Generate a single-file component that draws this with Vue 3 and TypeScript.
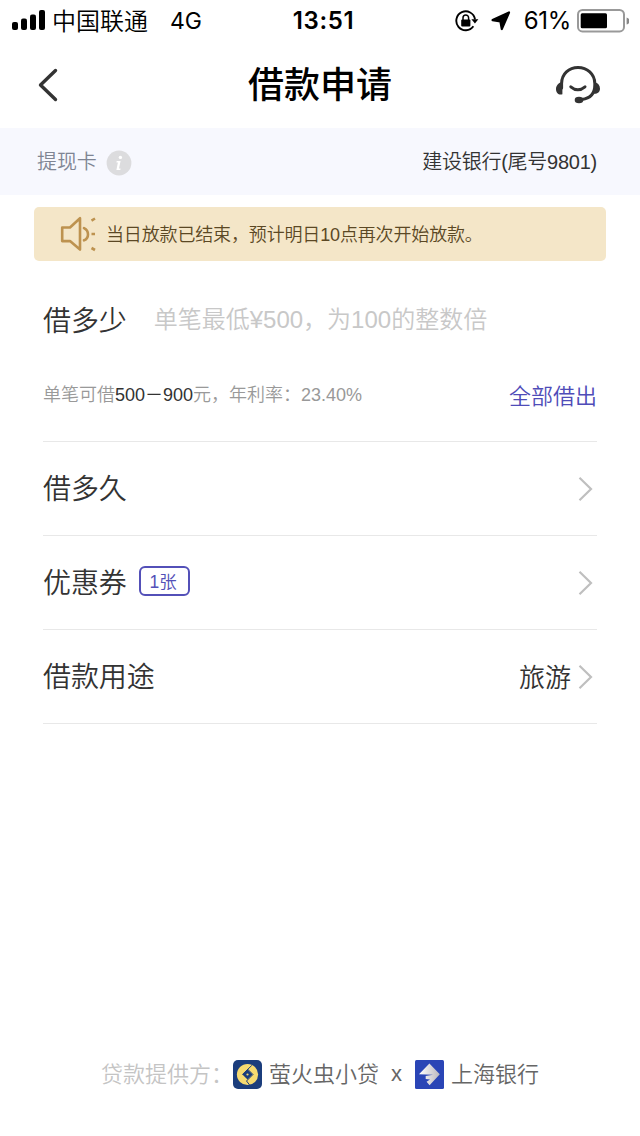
<script setup lang="ts">
interface Row {
  label: string
  badge?: string
  value?: string
}

const rows: Row[] = [
  { label: '借多久' },
  { label: '优惠券', badge: '1张' },
  { label: '借款用途', value: '旅游' },
]
</script>

<template>
  <main class="screen">
    <div class="status">
      <div class="status-left">
        <svg class="signal" width="34" height="20" viewBox="0 0 34 20">
          <rect x="0" y="12" width="6" height="8" rx="2" />
          <rect x="9" y="8.5" width="6" height="11.5" rx="2" />
          <rect x="18" y="4.5" width="6" height="15.5" rx="2" />
          <rect x="27" y="0" width="6" height="20" rx="2" />
        </svg>
        <span class="carrier">中国联通</span>
        <span class="network">4G</span>
      </div>
      <span class="clock">13:51</span>
      <div class="status-right">
        <svg class="lock" width="24" height="22" viewBox="0 0 24 22">
          <path d="M18.4 16.2A9.4 9.4 0 1 1 20 9.3" fill="none" stroke="#000" stroke-width="1.9" />
          <path d="M16.4 9.2H23.4L19.9 13.6Z" />
          <rect x="6.2" y="9.5" width="9.2" height="7" rx="1" />
          <path d="M8 10V7.8a2.8 2.8 0 0 1 5.6 0V10" fill="none" stroke="#000" stroke-width="1.5" />
        </svg>
        <svg class="arrow" width="20" height="20" viewBox="0 0 20 20">
          <path d="M18 1.5L10.8 18L9.4 10.4L1.6 9.1Z" stroke="#000" stroke-width="2.2" stroke-linejoin="round" />
        </svg>
        <span class="percent">61%</span>
        <svg class="battery" width="52" height="24" viewBox="0 0 52 24">
          <rect x="1" y="1" width="46" height="21.4" rx="4.5" fill="none" stroke="#999" stroke-width="2" />
          <rect x="3.7" y="4.2" width="26.3" height="15" rx="1.5" />
          <path d="M49.6 8.4Q52.5 9.4 52.5 12T49.6 15.6Z" fill="#888" />
        </svg>
      </div>
    </div>

    <header class="nav">
      <svg width="24" height="36" viewBox="0 0 24 36">
        <path d="M20.5 3.5L5.5 18L20.5 32.5" fill="none" stroke="#333" stroke-width="3.4" stroke-linecap="round" stroke-linejoin="round" />
      </svg>
      <h1>借款申请</h1>
      <svg width="48" height="42" viewBox="0 0 48 42">
        <g fill="none" stroke="#333" stroke-width="3" stroke-linecap="round">
          <path d="M7.6 24V19.5C7.6 9.9 15 3.4 24 3.4S40.8 9.9 40.8 19.5V21C40.8 29.6 35.8 34.5 27.8 35.4" />
          <path d="M16.8 22.8Q23.8 28.8 31 22.8" />
        </g>
        <path d="M8.4 17V30.3C4.8 31.6 2 28.7 2 25.2C2 21.6 4.5 19.4 6.6 18.6Z" fill="#333" />
        <path d="M40 17V29.8C43.5 30 46 27.8 46 24.7C46 21.4 43.7 19.4 41.8 18.6Z" fill="#333" />
        <ellipse cx="25" cy="36" rx="4.3" ry="3.2" fill="#333" />
      </svg>
    </header>

    <section class="card-bar">
      <div class="card-label">
        <span>提现卡</span>
        <svg width="26" height="26" viewBox="0 0 26 26">
          <circle cx="13" cy="13" r="12.4" fill="#dcdcde" />
          <circle cx="14.4" cy="7.4" r="1.7" fill="#fff" />
          <path d="M10.7 11H14.6L13 18.6H14.6L14.3 20H10.4L11.9 12.5H10.4Z" fill="#fff" />
        </svg>
      </div>
      <span class="card-name">建设银行(尾号9801)</span>
    </section>

    <section class="notice">
      <svg width="36" height="36" viewBox="0 0 36 36" fill="none" stroke="#bd924f" stroke-width="2.6" stroke-linejoin="round">
        <path d="M2.2 11.5H10L20 2.2V33.6L10 25.1H2.2Z" />
        <path d="M24 12.2Q28 14.2 28 18.4T24 24.3" stroke-linecap="round" />
        <path d="M31.5 4.6L35 2.5M31.5 18H35M31.5 32L35 34" />
      </svg>
      <span class="notice-text">当日放款已结束，预计明日10点再次开始放款。</span>
    </section>

    <section class="amount">
      <div class="amount-input">
        <span class="label">借多少</span>
        <span class="placeholder">单笔最低¥500，为100的整数倍</span>
      </div>
      <div class="amount-info">
        <span class="hint">单笔可借<b>500－900</b>元，年利率：23.40%</span>
        <span class="all">全部借出</span>
      </div>
    </section>

    <section v-for="row in rows" :key="row.label" class="row">
      <span class="label">{{ row.label }}</span>
      <span v-if="row.badge" class="badge">{{ row.badge }}</span>
      <span class="value">{{ row.value }}</span>
      <svg width="16" height="26" viewBox="0 0 16 26">
        <path d="M1.5 1.8L13 13L1.5 24.2" fill="none" stroke="#bfbfbf" stroke-width="2.2" />
      </svg>
    </section>

    <footer class="providers">
      <span class="by">贷款提供方：</span>
      <svg class="firefly" width="29" height="29" viewBox="0 0 29 29">
        <rect width="29" height="29" rx="5" fill="#1b3d7c" />
        <circle cx="14.5" cy="14.5" r="10.6" fill="#f6da70" />
        <path d="M18.8 5.4L9.4 14.5M14.5 9L20 14.5L13.5 21L16.5 24.8" fill="none" stroke="#1b3d7c" stroke-width="1" />
        <path d="M14.5 9.4L19.6 14.5L14.5 19.6L9.4 14.5Z" fill="#1b3d7c" />
        <circle cx="14.5" cy="14.5" r="1.1" fill="#f6da70" />
      </svg>
      <span>萤火虫小贷</span>
      <span class="times">x</span>
      <svg class="bank" width="29" height="29" viewBox="0 0 29 29">
        <defs>
          <linearGradient id="silver" x1="0" y1="0" x2="1" y2="0">
            <stop offset="0" stop-color="#fff" />
            <stop offset="1" stop-color="#bbb7bd" />
          </linearGradient>
        </defs>
        <rect width="29" height="29" rx="1.5" fill="#2a45b6" />
        <path d="M14.4 3.4L24.8 14.3L14.6 25.2L11.6 21.8L15 19.4L10.7 19V16L18 14.8L4 14.2Z" fill="url(#silver)" />
      </svg>
      <span>上海银行</span>
    </footer>
  </main>
</template>

<style>
body {
  margin: 0;
  background: #fff;
}
</style>

<style scoped>
.screen {
  display: flex;
  flex-direction: column;
  width: 640px;
  height: 1136px;
  overflow: hidden;
  background: #fff;
  color: #333;
  font-family: "Liberation Sans", "Noto Sans CJK SC", sans-serif;
  font-weight: 350;
  white-space: nowrap;
}
svg {
  display: block;
  flex: none;
}
.status {
  display: grid;
  grid-template-columns: 1fr auto 1fr;
  align-items: center;
  box-sizing: border-box;
  height: 41px;
  padding: 1px 11px 0 12px;
  color: #000;
  font-family: Inter, "Noto Sans CJK SC", sans-serif;
  font-size: 24px;
  line-height: 40px;
}
.status-left,
.status-right {
  display: flex;
  align-items: center;
  height: 40px;
}
.status-right {
  justify-content: flex-end;
}
.signal {
  margin-bottom: 2px;
}
.carrier {
  margin-left: 6px;
  padding-top: 1px;
}
.network {
  margin-left: 22px;
  font-weight: 400;
  font-size: 23px;
}
.clock {
  padding-left: 6px;
  font-weight: 600;
  letter-spacing: 0.6px;
}
.lock {
  margin-bottom: 1px;
}
.arrow {
  margin-left: 12px;
}
.percent {
  margin-left: 13px;
  font-weight: 400;
  letter-spacing: -0.3px;
}
.battery {
  margin-left: 6px;
}
.nav {
  display: grid;
  grid-template-columns: 1fr auto 1fr;
  align-items: center;
  height: 87px;
  padding: 0 38px 0 35px;
}
.nav svg:last-child {
  justify-self: end;
}
.nav h1 {
  margin: 0;
  padding: 2px 0 0 3px;
  color: #000;
  font-size: 36px;
  font-weight: 500;
  line-height: 85px;
}
.card-bar {
  display: flex;
  align-items: center;
  justify-content: space-between;
  height: 67px;
  padding: 0 43px 0 37px;
  background: #f7f8fe;
  font-size: 20px;
}
.card-label {
  display: flex;
  align-items: center;
  gap: 9px;
  color: #7f8593;
}
.card-label span {
  padding-bottom: 2px;
  letter-spacing: -0.1px;
}
.card-name {
  padding-bottom: 2px;
  letter-spacing: -0.25px;
}
.card-label svg {
  margin-top: 3px;
}
.notice {
  display: flex;
  align-items: center;
  gap: 10px;
  height: 54px;
  margin: 12px 34px 0;
  padding-left: 26px;
  border-radius: 5px;
  background: #f4e6c8;
  color: #5b4824;
  font-size: 18px;
}
.notice-text {
  padding-bottom: 2px;
  letter-spacing: -0.15px;
}
.amount {
  height: 180px;
  margin: 0 43px;
  border-bottom: 1px solid #e8e8e8;
}
.amount-input {
  display: flex;
  align-items: center;
  height: 116px;
}
.label {
  padding-bottom: 3px;
  font-size: 28px;
  letter-spacing: -0.1px;
}
.amount-input .label {
  padding-bottom: 0;
}
.placeholder {
  margin-left: 27px;
  padding-bottom: 3px;
  color: #c8c8c8;
  font-size: 24px;
}
.amount-info {
  display: flex;
  align-items: center;
  justify-content: space-between;
  height: 38px;
}
.hint {
  padding-bottom: 7px;
  color: #999;
  font-size: 18px;
}
.hint b {
  color: #333;
  font-weight: 400;
}
.all {
  padding-bottom: 4px;
  color: #4f4cb8;
  font-size: 22px;
}
.row {
  display: flex;
  align-items: center;
  height: 93px;
  margin: 0 43px;
  padding-right: 3px;
  border-bottom: 1px solid #e8e8e8;
}
.row svg {
  margin-left: 7px;
}
.badge {
  box-sizing: border-box;
  width: 51px;
  height: 30px;
  margin: 0 0 4px 12px;
  padding-right: 2px;
  border: 2px solid #5350b8;
  border-radius: 6px;
  color: #5350b8;
  font-size: 17.5px;
  line-height: 29px;
  text-align: center;
}
.value {
  margin-left: auto;
  padding-bottom: 2px;
  font-size: 26px;
}
.providers {
  display: flex;
  align-items: center;
  height: 40px;
  margin-top: auto;
  padding: 0 0 42px 101px;
  color: #666;
  font-size: 22px;
}
.providers span {
  padding-bottom: 4px;
}
.by {
  color: #c4c4c4;
}
.firefly {
  margin: 0 7px 0 0;
}
.providers .times {
  margin: 0 13px 0 12px;
  padding-bottom: 0;
}
.bank {
  margin-right: 7px;
}
</style>
